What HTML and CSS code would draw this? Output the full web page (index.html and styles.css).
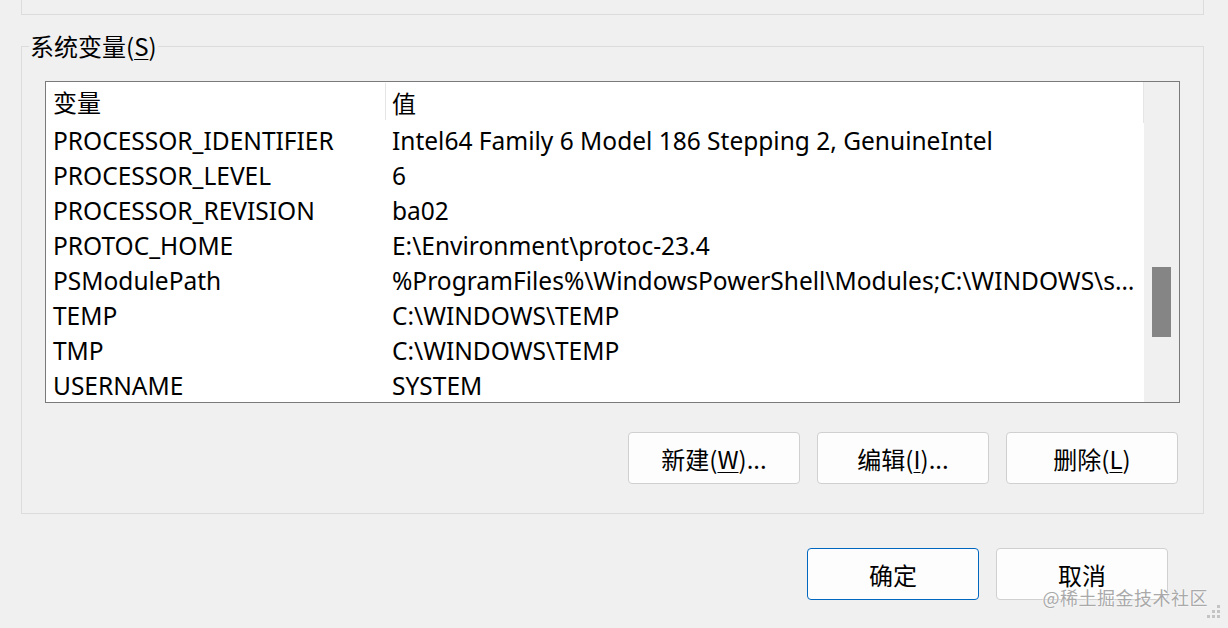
FILE: index.html
```html
<!DOCTYPE html>
<html lang="zh-CN">
<head>
<meta charset="utf-8">
<title>系统变量</title>
<link rel="stylesheet" href="styles.css">
</head>
<body>
<div class="window">
  <div class="prev-group"></div>

  <fieldset class="group">
    <legend class="group-title">系统变量(<u>S</u>)</legend>

    <div class="listbox">
      <div class="list-main">
        <div class="row header">
          <div class="cell name">变量</div>
          <div class="cell value">值</div>
        </div>
        <div class="row"><div class="cell name">PROCESSOR_IDENTIFIER</div><div class="cell value">Intel64 Family 6 Model 186 Stepping 2, GenuineIntel</div></div>
        <div class="row"><div class="cell name">PROCESSOR_LEVEL</div><div class="cell value">6</div></div>
        <div class="row"><div class="cell name">PROCESSOR_REVISION</div><div class="cell value">ba02</div></div>
        <div class="row"><div class="cell name">PROTOC_HOME</div><div class="cell value">E:\Environment\protoc-23.4</div></div>
        <div class="row"><div class="cell name">PSModulePath</div><div class="cell value">%ProgramFiles%\WindowsPowerShell\Modules;C:\WINDOWS\system32\WindowsPowerShell\v1.0\Modules</div></div>
        <div class="row"><div class="cell name">TEMP</div><div class="cell value">C:\WINDOWS\TEMP</div></div>
        <div class="row"><div class="cell name">TMP</div><div class="cell value">C:\WINDOWS\TEMP</div></div>
        <div class="row"><div class="cell name">USERNAME</div><div class="cell value">SYSTEM</div></div>
      </div>
      <div class="scrollbar"><div class="thumb"></div></div>
    </div>

    <div class="actions">
      <button class="btn">新建(<u>W</u>)...</button>
      <button class="btn">编辑(<u>I</u>)...</button>
      <button class="btn">删除(<u>L</u>)</button>
    </div>
  </fieldset>

  <div class="dialog-actions">
    <button class="btn primary">确定</button>
    <button class="btn">取消</button>
  </div>

  <div class="watermark">@稀土掘金技术社区</div>

  <svg class="grip" width="20" height="20" viewBox="0 0 20 20" aria-hidden="true">
    <rect x="13" y="1" width="3" height="3" fill="#c4c4c4"/>
    <rect x="8" y="6" width="3" height="3" fill="#c4c4c4"/>
    <rect x="13" y="6" width="3" height="3" fill="#c4c4c4"/>
    <rect x="3" y="11" width="3" height="3" fill="#c4c4c4"/>
    <rect x="8" y="11" width="3" height="3" fill="#c4c4c4"/>
    <rect x="13" y="11" width="3" height="3" fill="#c4c4c4"/>
  </svg>
</div>
</body>
</html>
```

FILE: styles.css
```css
html, body {
  margin: 0;
  padding: 0;
  background: #f0f0f0;
}

body {
  font-family: "Noto Sans", "Noto Sans CJK SC", sans-serif;
  color: #000;
}

.window {
  position: relative;
  width: 1228px;
  height: 628px;
  overflow: hidden;
  background: #f0f0f0;
}

.prev-group {
  margin-left: 21px;
  width: 1181px;
  height: 14px;
  border: 1px solid #dcdcdc;
  border-top: none;
}

.group {
  margin: 17px 0 0 21px;
  width: 1183px;
  height: 482px;
  box-sizing: border-box;
  border: 1px solid #dcdcdc;
  padding: 21px 24px 0 23px;
  min-width: 0;
  display: flex;
  flex-direction: column;
}

.group-title {
  font-family: "Noto Sans CJK SC", sans-serif;
  font-size: 24px;
  line-height: 28px;
  padding: 0 1px;
  margin-left: -16px;
}

.group-title u {
  text-decoration-thickness: 1px;
  text-underline-offset: 3px;
}

.listbox {
  width: 1135px;
  height: 322px;
  box-sizing: border-box;
  border: 1px solid #7a7a7a;
  background: #fff;
  display: flex;
}

.list-main {
  flex: 1;
  min-width: 0;
  overflow: hidden;
}

.row {
  display: flex;
  height: 35px;
  align-items: center;
  font-size: 24.5px;
}

.row.header {
  height: 41px;
  align-items: stretch;
  border-right: 1px solid #e5e5e5;
}

.row.header .cell {
  font-family: "Noto Sans CJK SC", sans-serif;
  font-size: 24px;
  display: flex;
  align-items: center;
}

.cell.name {
  width: 340px;
  flex: none;
  box-sizing: border-box;
  padding-left: 7px;
  white-space: nowrap;
}

.header .cell.name {
  border-right: 1px solid #e5e5e5;
  margin: 1px 0 3px;
}

.cell.value {
  flex: 1;
  min-width: 0;
  padding-left: 6px;
  padding-right: 4px;
  white-space: nowrap;
  overflow: hidden;
  text-overflow: ellipsis;
}

.scrollbar {
  width: 35px;
  flex: none;
  background: #f0f0f0;
  padding-top: 185px;
  box-sizing: border-box;
}

.thumb {
  width: 19px;
  height: 70px;
  margin-left: 8px;
  background: #858585;
}

.actions {
  display: flex;
  justify-content: flex-end;
  gap: 17px;
  margin-top: 29px;
  margin-right: 1px;
}

.btn {
  width: 172px;
  height: 52px;
  box-sizing: border-box;
  border: 1px solid #d0d0d0;
  border-radius: 4px;
  background: #fdfdfd;
  font-family: "Noto Sans CJK SC", sans-serif;
  font-size: 24px;
  color: #000;
  padding: 0;
}

.btn u {
  text-decoration-thickness: 1px;
  text-underline-offset: 3px;
}

.btn.primary {
  border: 1px solid #0067c0;
}

.dialog-actions {
  display: flex;
  justify-content: flex-end;
  gap: 17px;
  margin-top: 34px;
  margin-right: 60px;
}

.watermark {
  position: absolute;
  right: 20px;
  bottom: 18px;
  font-family: "Noto Sans CJK SC", sans-serif;
  font-size: 18px;
  color: #a9a9a9;
  text-shadow: 0 0 2px #fff, 0 0 1px #fff;
  letter-spacing: 0.5px;
}

.grip {
  position: absolute;
  right: 4px;
  bottom: 4px;
}
```
